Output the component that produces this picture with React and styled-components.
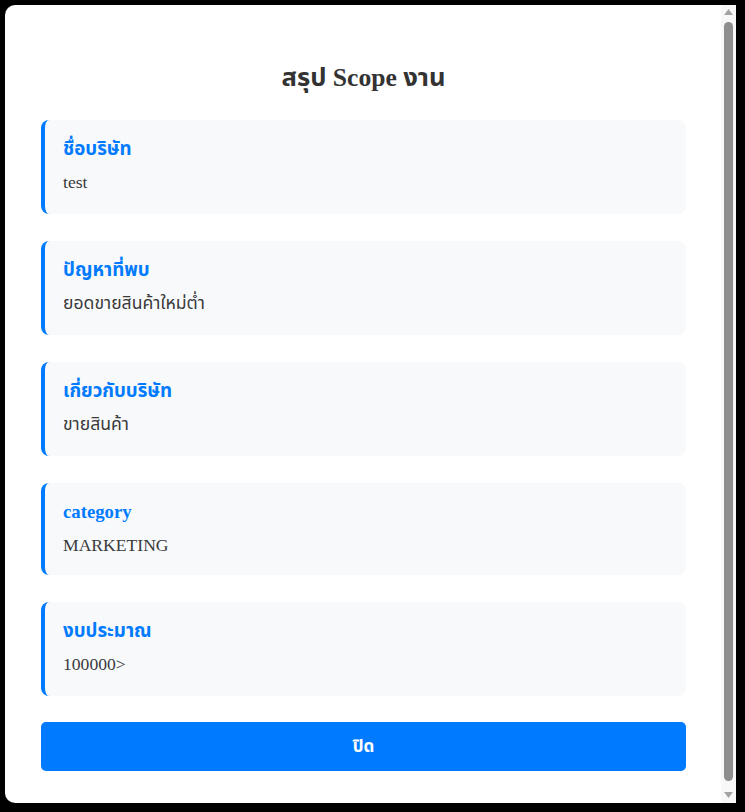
import React from "react";
import styled, { createGlobalStyle } from "styled-components";

const Global = createGlobalStyle`
  html, body {
    margin: 0;
    padding: 0;
    background: #000;
  }
  body {
    font-family: "Liberation Serif", "Noto Sans Thai", "Tahoma", "DejaVu Sans", "Noto Sans", serif;
    color: #333;
  }
  * { box-sizing: border-box; }
`;

const Overlay = styled.div`
  width: 745px;
  height: 812px;
  padding: 5px 9px 9px 5px;
  background: #000;
`;

const Modal = styled.div`
  display: flex;
  width: 731px;
  height: 798px;
  background: #fff;
  border-radius: 10px 0 0 10px;
  overflow: hidden;
`;

const Body = styled.div`
  flex: 1;
  min-width: 0;
  height: 100%;
  overflow: hidden;
  padding: 57px 35px 41px 36px;
`;

const Rail = styled.div`
  flex: 0 0 15px;
  display: flex;
  flex-direction: column;
  align-items: center;
  background: #f8f8f8;
  padding: 4px 0 5px;
`;

const Arrow = styled.svg`
  display: block;
  flex: 0 0 auto;
`;

const Thumb = styled.div`
  flex: 1;
  width: 9px;
  margin: 7px 0 11px;
  border-radius: 5px;
  background: #8e8e8e;
`;

const Title = styled.h2`
  margin: 0 0 27px;
  font-size: 25.6px;
  line-height: 31px;
  font-weight: 700;
  text-align: center;
  color: #333;
`;

const List = styled.div`
  display: flex;
  flex-direction: column;
  gap: 27px;
`;

const Card = styled.section`
  background: #f8f9fa;
  border-left: 4px solid #007bff;
  border-radius: 8px;
  padding: 17px 18px ${(p) => (p.$latin ? "19px" : "21px")};
`;

const Label = styled.h3`
  margin: 0 0 12px;
  font-size: 18.72px;
  line-height: 23px;
  font-weight: 700;
  color: #007bff;
`;

const Value = styled.p`
  margin: 0;
  font-size: 17.6px;
  line-height: 21px;
  color: #3a3a3a;
`;

const CloseButton = styled.button`
  display: block;
  width: 100%;
  height: 49px;
  margin-top: 26px;
  border: none;
  border-radius: 5px;
  background: #007bff;
  color: #fff;
  font-family: inherit;
  font-size: 17px;
  font-weight: 700;
  cursor: pointer;
`;

const items = [
  { label: "ชื่อบริษัท", value: "test" },
  { label: "ปัญหาที่พบ", value: "ยอดขายสินค้าใหม่ต่ำ" },
  { label: "เกี่ยวกับบริษัท", value: "ขายสินค้า" },
  { label: "category", value: "MARKETING", latin: true },
  { label: "งบประมาณ", value: "100000>" },
];

export default function App() {
  return (
    <>
      <Global />
      <Overlay>
        <Modal>
          <Body>
            <Title>สรุป Scope งาน</Title>
            <List>
              {items.map((it) => (
                <Card key={it.label} $latin={it.latin}>
                  <Label>{it.label}</Label>
                  <Value>{it.value}</Value>
                </Card>
              ))}
            </List>
            <CloseButton>ปิด</CloseButton>
          </Body>
          <Rail aria-hidden="true">
            <Arrow width="9" height="6" viewBox="0 0 9 6">
              <polygon points="0,6 9,6 4.5,0" fill="#a3a3a3" />
            </Arrow>
            <Thumb />
            <Arrow width="9" height="6" viewBox="0 0 9 6">
              <polygon points="0,0 9,0 4.5,6" fill="#a3a3a3" />
            </Arrow>
          </Rail>
        </Modal>
      </Overlay>
    </>
  );
}
